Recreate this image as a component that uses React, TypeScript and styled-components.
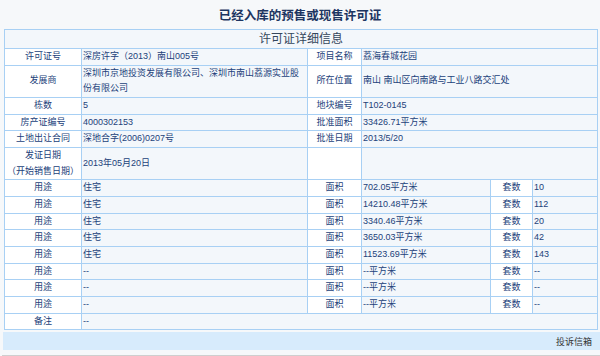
import styled, { createGlobalStyle } from "styled-components";

const GlobalStyle = createGlobalStyle`
    html, body {
        margin: 0;
        padding: 0;
        background: #f6f8fa;
        font-family: "Liberation Sans", "Noto Sans CJK SC", sans-serif;
    }
`;

type InfoRow = { label: string; value: string; label2: string; value2: string };
type UseRow = { use: string; area: string; units: string };

const infoRows: InfoRow[] = [
    { label: "许可证号", value: "深房许字（2013）南山005号", label2: "项目名称", value2: "荔海春城花园" },
    { label: "发展商", value: "深圳市京地投资发展有限公司、深圳市南山荔源实业股份有限公司", label2: "所在位置", value2: "南山 南山区向南路与工业八路交汇处" },
    { label: "栋数", value: "5", label2: "地块编号", value2: "T102-0145" },
    { label: "房产证编号", value: "4000302153", label2: "批准面积", value2: "33426.71平方米" },
    { label: "土地出让合同", value: "深地合字(2006)0207号", label2: "批准日期", value2: "2013/5/20" },
];

const useRows: UseRow[] = [
    { use: "住宅", area: "702.05平方米", units: "10" },
    { use: "住宅", area: "14210.48平方米", units: "112" },
    { use: "住宅", area: "3340.46平方米", units: "20" },
    { use: "住宅", area: "3650.03平方米", units: "42" },
    { use: "住宅", area: "11523.69平方米", units: "143" },
    { use: "--", area: "--平方米", units: "--" },
    { use: "--", area: "--平方米", units: "--" },
    { use: "--", area: "--平方米", units: "--" },
];

const App = () => {
    return (
        <>
            <GlobalStyle />
            <Page>
                <Title>已经入库的预售或现售许可证</Title>
                <Table>
                    <colgroup>
                        <col style={{ width: 77 }} />
                        <col style={{ width: 226 }} />
                        <col style={{ width: 54 }} />
                        <col style={{ width: 129 }} />
                        <col style={{ width: 42 }} />
                        <col style={{ width: 65 }} />
                    </colgroup>
                    <tbody>
                        <tr>
                            <HeadCell colSpan={6}>许可证详细信息</HeadCell>
                        </tr>
                        {infoRows.map((row) => (
                            <tr key={row.label}>
                                <LabelCell>{row.label}</LabelCell>
                                <ValueCell>{row.value}</ValueCell>
                                <LabelCell>{row.label2}</LabelCell>
                                <ValueCell colSpan={3}>{row.value2}</ValueCell>
                            </tr>
                        ))}
                        <tr>
                            <LabelCell>
                                发证日期
                                <br />
                                （开始销售日期）
                            </LabelCell>
                            <ValueCell>2013年05月20日</ValueCell>
                            <LabelCell />
                            <ValueCell colSpan={3} />
                        </tr>
                        {useRows.map((row, i) => (
                            <tr key={i}>
                                <LabelCell>用途</LabelCell>
                                <ValueCell>{row.use}</ValueCell>
                                <LabelCell>面积</LabelCell>
                                <ValueCell>{row.area}</ValueCell>
                                <LabelCell>套数</LabelCell>
                                <ValueCell>{row.units}</ValueCell>
                            </tr>
                        ))}
                        <tr>
                            <LabelCell>备注</LabelCell>
                            <ValueCell colSpan={5}>--</ValueCell>
                        </tr>
                    </tbody>
                </Table>
                <Footer>
                    <FooterLink>投诉信箱</FooterLink>
                </Footer>
                <BottomRule />
            </Page>
        </>
    );
};

export default App;

const Page = styled.div`
    width: 600px;
    height: 356px;
    overflow: hidden;
`;

const Title = styled.h1`
    margin: 0;
    height: 29px;
    display: flex;
    align-items: center;
    justify-content: center;
    font-size: 12.5px;
    font-weight: bold;
    color: #1d3561;
`;

const Table = styled.table`
    margin-left: 4px;
    width: 593px;
    table-layout: fixed;
    border-collapse: collapse;
    border: 1px solid #a8d0f4;
    font-size: 9px;
    color: #22417a;
`;

const HeadCell = styled.td`
    padding: 0;
    text-align: center;
    font-size: 12px;
    line-height: 18px;
    color: #34465c;
    background: #f3f7fb;
    border: 1px solid #a8d0f4;
`;

const LabelCell = styled.td`
    padding: 0;
    line-height: 15.65px;
    text-align: center;
    background: #ffffff;
    border: 1px solid #a8d0f4;
`;

const ValueCell = styled.td`
    padding: 0 2px 0 1px;
    line-height: 15.65px;
    text-align: left;
    background: #f3f7fb;
    border: 1px solid #a8d0f4;
`;

const Footer = styled.div`
    margin: 2px 0 0 3px;
    height: 18px;
    padding-right: 8px;
    display: flex;
    align-items: center;
    justify-content: flex-end;
    background: #d7ebfc;
`;

const FooterLink = styled.span`
    font-size: 9px;
    color: #333333;
`;

const BottomRule = styled.div`
    margin: 5px 0 0 2px;
    height: 1px;
    background: #cfcfcf;
`;
